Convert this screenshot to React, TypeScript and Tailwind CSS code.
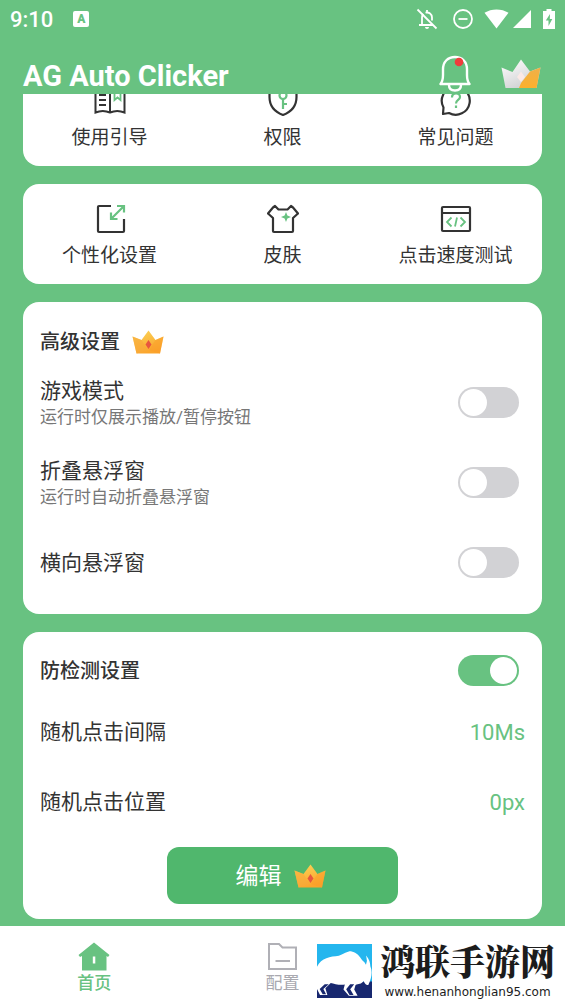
import React, { useLayoutEffect, useRef, useState } from 'react';

const Crown: React.FC<{ className?: string }> = ({ className }) => (
    <svg className={className} width="32" height="24" viewBox="0 0 32 24" aria-hidden="true">
        <defs>
            <linearGradient id="crownGold" x1="0" y1="0" x2="0.4" y2="1">
                <stop offset="0" stopColor="#fbd65a" />
                <stop offset="1" stopColor="#fba52c" />
            </linearGradient>
        </defs>
        <path d="M0.5 6.5L9.5 10L16.5 0.5L23.5 10L31.5 6.5L28 23.5H4.5Z" fill="url(#crownGold)" />
        <path d="M0.5 6.5L9.5 10L16 20L4.5 23.5Z" fill="#f9a93a" opacity="0.6" />
        <path d="M31.5 6.5L23.5 10L17 20L28 23.5Z" fill="#fb9c28" opacity="0.5" />
        <path d="M16.5 10L19.5 14.5L16.5 19L13.5 14.5Z" fill="#e8563f" />
    </svg>
);

const SilverCrown: React.FC = () => (
    <svg width="40" height="30" viewBox="0 0 40 30" aria-hidden="true">
        <defs>
            <linearGradient id="crownSilver" x1="0" y1="0" x2="0.6" y2="1">
                <stop offset="0" stopColor="#ffffff" />
                <stop offset="1" stopColor="#cfd0d2" />
            </linearGradient>
            <linearGradient id="crownSide" x1="0" y1="0" x2="0" y2="1">
                <stop offset="0" stopColor="#eeb04a" />
                <stop offset="1" stopColor="#fdb02c" />
            </linearGradient>
        </defs>
        <path d="M0.5 8.5L11.5 13L20 0.5L29 12.5L39.5 8.5L35.5 29H4.5Z" fill="url(#crownSilver)" />
        <path d="M39.5 8.5L29 12.5L20 24L18 29H35.5Z" fill="url(#crownSide)" />
        <path d="M20 12.5L24 18L20 23L16 18Z" fill="#fbe9e6" />
    </svg>
);

const Bell: React.FC = () => (
    <svg width="32" height="37" viewBox="0 0 32 37" fill="none" stroke="#fff" strokeWidth="2.4" aria-hidden="true">
        <path d="M1.5 29H30.5C28.5 26.5 28 24 28 20V14.5C28 6.5 23 2 16 2S4 6.5 4 14.5V20C4 24 3.5 26.5 1.5 29Z" strokeLinejoin="round" />
        <path d="M10 30C10 34 12.5 35.5 16 35.5S22 34 22 30" />
        <circle cx="20" cy="7" r="4.3" fill="#f03c3c" stroke="none" />
    </svg>
);

const GuideIcon = () => (
    <svg width="32" height="30" viewBox="0 0 32 30" fill="none" stroke="#333" strokeWidth="2" aria-hidden="true">
        <path d="M1.5 4C6 2.5 11.5 2.5 16 5C20.5 2.5 26 2.5 30.5 4V26.5C26 24.5 20.5 24.5 16 26.5C11.5 24.5 6 24.5 1.5 26.5ZM16 5V26" />
        <path d="M5 9H12M5 14H12M5 19H12" />
        <path d="M20.5 4V14L23.500 11.500L26.500 14V4" stroke="#68c281" strokeWidth="1.8" />
    </svg>
);

const PermissionIcon = () => (
    <svg width="32" height="30" viewBox="0 0 32 30" fill="none" strokeWidth="2.2" aria-hidden="true">
        <path d="M16 1.5C11.5 4 7 5 2.500 5V11C2.500 20.500 8 26 16 29C24 26 29.500 20.500 29.500 11V5C25 5 20.500 4 16 1.500Z" stroke="#333" />
        <g stroke="#68c281">
            <circle cx="16" cy="9.5" r="3.5" />
            <path d="M16 13V23M16 18H20" />
        </g>
    </svg>
);

const FaqIcon = () => (
    <svg width="32" height="30" viewBox="0 0 32 30" fill="none" strokeWidth="2.2" aria-hidden="true">
        <path d="M3.5 21.5A14 14 0 1 1 9 27L3 28Z" stroke="#333" strokeLinejoin="round" />
        <path d="M12 11.5C12 6 20 6 20 11C20 14 16 14 16 17.5M16 19.5V22" stroke="#68c281" />
    </svg>
);

const CustomizeIcon = () => (
    <svg width="32" height="30" viewBox="0 0 32 30" fill="none" strokeWidth="2.2" aria-hidden="true">
        <path d="M17 2H5C4.4 2 4 2.4 4 3V27C4 27.6 4.4 28 5 28H29C29.6 28 30 27.6 30 27V15" stroke="#333" />
        <path d="M17 15L30 2M23 2H30V8.5M17 8.5V15H23.5" stroke="#68c281" />
    </svg>
);

const SkinIcon = () => (
    <svg width="32" height="30" viewBox="0 0 32 30" fill="none" aria-hidden="true">
        <path d="M8 2L11.5 5.5H20.5L24 2L26 3.5L31 9.5L26 14V27C26 27.6 25.6 28 25 28H7C6.4 28 6 27.6 6 27V14L1 9.5L6 3.5Z" stroke="#333" strokeWidth="2.2" strokeLinejoin="round" />
        <path d="M19 8L20.4 11.6L24 13L20.4 14.4L19 18L17.6 14.4L14 13L17.6 11.6Z" fill="#68c281" />
    </svg>
);

const SpeedIcon = () => (
    <svg width="32" height="30" viewBox="0 0 32 30" fill="none" strokeWidth="2.2" aria-hidden="true">
        <path d="M3 3H29C29.6 3 30 3.4 30 4V26C30 26.6 29.6 27 29 27H3C2.4 27 2 26.6 2 26V4C2 3.4 2.4 3 3 3ZM2 9H30" stroke="#333" />
        <path d="M11.5 13.5L7 18L11.5 22.5M20.5 13.5L25 18L20.5 22.5M17 13.5L15 22.5" stroke="#68c281" strokeWidth="1.8" />
    </svg>
);

const StatusIcons = () => (
    <div className="flex items-center" aria-hidden="true">
        <svg width="22" height="22" viewBox="0 0 22 22" fill="none" stroke="#fff" strokeWidth="1.8">
            <path d="M6 17V9.5C6 8 6.5 6.8 7.3 6M9.5 4.7C13 3.8 16 6 16 9.5V12.5M3 17H17M11 2V4.5" />
            <path d="M1.5 1.5L20.5 20.5" />
            <path d="M9 19H13C13 21.5 9 21.5 9 19Z" fill="#fff" stroke="none" />
        </svg>
        <svg className="ml-3.5" width="22" height="22" viewBox="0 0 22 22" fill="none" stroke="#fff" strokeWidth="1.8">
            <circle cx="11" cy="11" r="9" />
            <path d="M6.5 11H15.5" />
        </svg>
        <svg className="ml-2.5" width="25" height="20" viewBox="0 0 25 20" fill="#fff">
            <path d="M0.5 3.8C7.5 -0.7 17.5 -0.7 24.5 3.8L12.5 19.5Z" />
        </svg>
        <svg className="ml-1" width="18" height="18" viewBox="0 0 18 18" fill="#fff">
            <path d="M18 0V18H0Z" />
        </svg>
        <svg className="ml-3" width="12" height="20" viewBox="0 0 12 20" fill="#fff">
            <path d="M3.5 0H8.5V2H12V20H0V2H3.5Z" />
            <path d="M7 5L2.8 11.5H5.5V17L9.3 10H6.8Z" fill="#68c281" />
        </svg>
    </div>
);

const HomeIcon = () => (
    <svg width="32" height="29" viewBox="0 0 32 29" fill="#68c281" aria-hidden="true">
        <path d="M16 0.5L31.5 13L30 15L28.5 14V28.5H4V14L2 15L0.5 13Z" />
        <path d="M14.8 14.5H17.3V21.5H14.8Z" fill="#fff" />
    </svg>
);

const FolderIcon = () => (
    <svg width="32" height="29" viewBox="0 0 32 29" fill="none" stroke="#b0b0b6" strokeWidth="2" aria-hidden="true">
        <path d="M3 2H13L16.5 5.5H30V27H3Z" />
        <path d="M9.5 19H24" />
    </svg>
);

const BullLogo = () => (
    <svg className="shrink-0 mb-0.5" width="55" height="54" viewBox="25 28 164 161" preserveAspectRatio="none" aria-hidden="true">
        <path d="M25 28H189V189H25Z" fill="#24b6ee" />
        <path d="M25 140H189V189H25Z" fill="#17276f" />
        <path d="M25 96C38 68 65 66 90 63C106 57 116 49 128 50C144 53 152 64 162 79C172 86 176 78 171 62C182 74 184 86 184 94C191 110 188 130 178 150C172 152 168 146 164 138C158 148 148 146 140 150L136 164L146 182H120L104 164L108 149C92 152 76 146 66 144L50 160L56 180H34L25 162Z" fill="#fff" />
        <path d="M164 79C158 71 163 62 171 60C167 66 169 72 174 78L171 90Z" fill="#24b6ee" />
        <path d="M60 148L44 162L52 178H42L33 162L48 148ZM136 148L124 163L134 180H122L112 163L124 148Z" fill="#17276f" />
    </svg>
);

const firstRow = [
    { label: '使用引导', icon: <GuideIcon /> },
    { label: '权限', icon: <PermissionIcon /> },
    { label: '常见问题', icon: <FaqIcon /> },
];

const secondRow = [
    { label: '个性化设置', icon: <CustomizeIcon /> },
    { label: '皮肤', icon: <SkinIcon /> },
    { label: '点击速度测试', icon: <SpeedIcon /> },
];

const advancedSettings = [
    { id: 'game', title: '游戏模式', hint: '运行时仅展示播放/暂停按钮' },
    { id: 'fold', title: '折叠悬浮窗', hint: '运行时自动折叠悬浮窗' },
    { id: 'landscape', title: '横向悬浮窗', hint: '' },
];

const randomSettings = [
    { title: '随机点击间隔', value: '10Ms' },
    { title: '随机点击位置', value: '0px' },
];

const ShortcutCard: React.FC<{ items: { label: string; icon: React.ReactNode }[] }> = ({ items }) => (
    <section className="grid grid-cols-3 bg-white rounded-2xl shrink-0">
        {items.map((item) => (
            <button key={item.label} type="button" className="flex flex-col items-center pt-5 pb-3">
                {item.icon}
                <span className="mt-2 mb-0.5 text-[19px] leading-7 whitespace-nowrap">{item.label}</span>
            </button>
        ))}
    </section>
);

const Toggle: React.FC<{ id: string; checked: boolean; onChange: () => void }> = ({ id, checked, onChange }) => (
    <input
        id={id}
        type="checkbox"
        role="switch"
        checked={checked}
        onChange={onChange}
        className="appearance-none shrink-0 w-[61px] h-[31px] p-0.5 mr-1.5 rounded-full bg-[#d2d2d5] checked:bg-[#68c281] before:block before:size-[27px] before:rounded-full before:bg-white checked:before:ml-auto"
    />
);

const App: React.FC = () => {
    const [enabled, setEnabled] = useState<Record<string, boolean>>({ detect: true });
    const scroller = useRef<HTMLElement>(null);

    const toggle = (id: string) => setEnabled((prev) => ({ ...prev, [id]: !prev[id] }));

    // Open at the end of the list
    useLayoutEffect(() => {
        if (scroller.current) {
            scroller.current.scrollTop = scroller.current.scrollHeight;
        }
    }, []);

    return (
        <div className="relative flex flex-col h-screen bg-[#68c281] text-[#333] font-[Roboto,'Noto_Sans_CJK_SC',sans-serif]">
            <header className="shrink-0 text-white">
                <div className="flex items-center justify-between h-[38px] px-2.5">
                    <div className="flex items-center gap-5">
                        <span className="text-[22px] font-medium">9:10</span>
                        <span className="flex justify-center w-4 h-4 bg-white rounded-xs text-[#68c281] text-xs leading-4 font-black">A</span>
                    </div>
                    <StatusIcons />
                </div>
                <div className="flex items-end justify-between h-14 pl-[23px] pr-6">
                    <h1 className="text-[29px] leading-9 font-bold">AG Auto Clicker</h1>
                    <div className="flex items-center gap-[30px] pb-0.5">
                        <button type="button" aria-label="通知"><Bell /></button>
                        <button type="button" aria-label="会员"><SilverCrown /></button>
                    </div>
                </div>
            </header>

            <main ref={scroller} className="flex-1 min-h-0 flex flex-col gap-[18px] px-[23px] pb-[7px] overflow-y-auto [scrollbar-width:none]">
                <ShortcutCard items={firstRow} />
                <ShortcutCard items={secondRow} />

                {/* Advanced settings */}
                <section className="shrink-0 bg-white rounded-2xl px-[17px] pt-5 pb-3">
                    <div className="flex items-center gap-3 h-10">
                        <h2 className="text-xl font-medium">高级设置</h2>
                        <Crown />
                    </div>
                    {advancedSettings.map((item) => (
                        <div key={item.id} className="flex items-center justify-between h-20">
                            <label htmlFor={item.id} className="pt-0.5">
                                <span className="block text-[21px] leading-7">{item.title}</span>
                                {item.hint && <span className="block text-[17px] leading-6 text-[#777]">{item.hint}</span>}
                            </label>
                            <Toggle id={item.id} checked={!!enabled[item.id]} onChange={() => toggle(item.id)} />
                        </div>
                    ))}
                </section>

                {/* Anti-detection settings */}
                <section className="shrink-0 bg-white rounded-2xl px-[17px] pt-3 pb-[15px]">
                    <div className="flex items-center justify-between h-[53px]">
                        <label htmlFor="detect" className="text-xl font-medium">防检测设置</label>
                        <Toggle id="detect" checked={!!enabled.detect} onChange={() => toggle('detect')} />
                    </div>
                    {randomSettings.map((item) => (
                        <div key={item.title} className="flex items-center justify-between h-[70px] text-[21px]">
                            <span className="pt-0.5">{item.title}</span>
                            <span className="text-[22px] text-[#68c281]">{item.value}</span>
                        </div>
                    ))}
                    <button type="button" className="flex items-center justify-center gap-3 w-[231px] h-[57px] pr-1 mx-auto mt-2.5 rounded-xl bg-[#50b76d] text-white text-[23px]">
                        <span className="pt-1">编辑</span>
                        <Crown />
                    </button>
                </section>
            </main>

            <nav className="shrink-0 grid grid-cols-3 h-[78px] bg-white text-[17px] leading-6">
                <button type="button" className="flex flex-col items-center pt-4 font-medium text-[#68c281]">
                    <HomeIcon />
                    首页
                </button>
                <button type="button" className="flex flex-col items-center pt-4 text-[#a9a9b0]">
                    <FolderIcon />
                    配置
                </button>
            </nav>

            <a href="#site" className="absolute right-0 bottom-0 flex items-end gap-2 pr-2.5 pb-1 bg-white text-[#1c1c1c]">
                <BullLogo />
                <span className="flex flex-col items-center">
                    <span className="text-[35px] leading-12 font-black font-['Noto_Serif_CJK_SC','Noto_Sans_CJK_SC',serif]">鸿联手游网</span>
                    <span className="text-xs leading-4 font-['DejaVu_Sans',sans-serif]">www.henanhonglian95.com</span>
                </span>
            </a>
        </div>
    );
};

export default App;
